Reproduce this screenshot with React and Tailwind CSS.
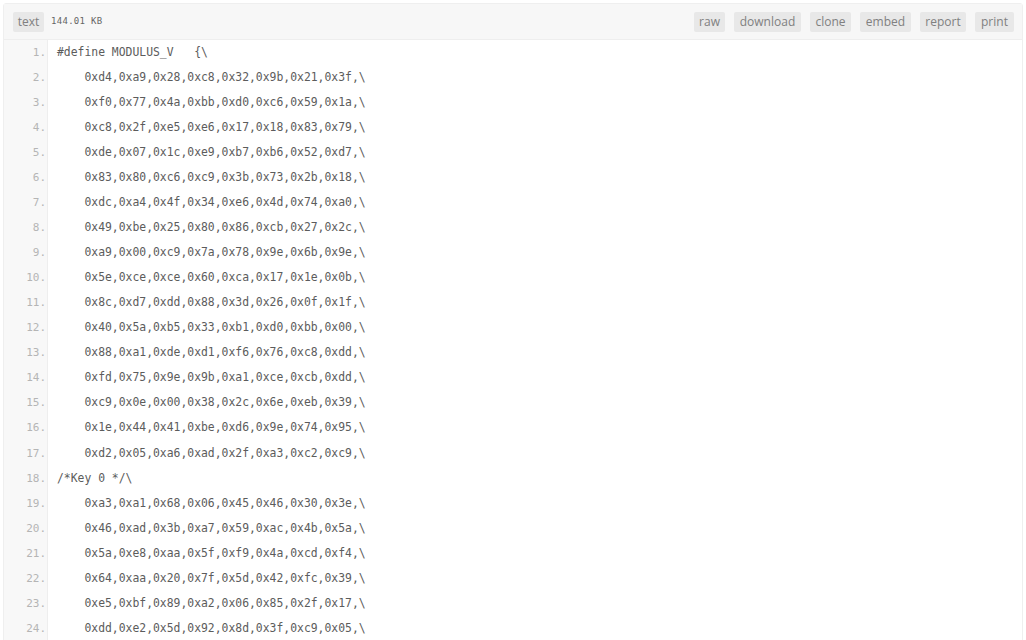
const lines = [
  "#define MODULUS_V   {\\",
  "    0xd4,0xa9,0x28,0xc8,0x32,0x9b,0x21,0x3f,\\",
  "    0xf0,0x77,0x4a,0xbb,0xd0,0xc6,0x59,0x1a,\\",
  "    0xc8,0x2f,0xe5,0xe6,0x17,0x18,0x83,0x79,\\",
  "    0xde,0x07,0x1c,0xe9,0xb7,0xb6,0x52,0xd7,\\",
  "    0x83,0x80,0xc6,0xc9,0x3b,0x73,0x2b,0x18,\\",
  "    0xdc,0xa4,0x4f,0x34,0xe6,0x4d,0x74,0xa0,\\",
  "    0x49,0xbe,0x25,0x80,0x86,0xcb,0x27,0x2c,\\",
  "    0xa9,0x00,0xc9,0x7a,0x78,0x9e,0x6b,0x9e,\\",
  "    0x5e,0xce,0xce,0x60,0xca,0x17,0x1e,0x0b,\\",
  "    0x8c,0xd7,0xdd,0x88,0x3d,0x26,0x0f,0x1f,\\",
  "    0x40,0x5a,0xb5,0x33,0xb1,0xd0,0xbb,0x00,\\",
  "    0x88,0xa1,0xde,0xd1,0xf6,0x76,0xc8,0xdd,\\",
  "    0xfd,0x75,0x9e,0x9b,0xa1,0xce,0xcb,0xdd,\\",
  "    0xc9,0x0e,0x00,0x38,0x2c,0x6e,0xeb,0x39,\\",
  "    0x1e,0x44,0x41,0xbe,0xd6,0x9e,0x74,0x95,\\",
  "    0xd2,0x05,0xa6,0xad,0x2f,0xa3,0xc2,0xc9,\\",
  "/*Key 0 */\\",
  "    0xa3,0xa1,0x68,0x06,0x45,0x46,0x30,0x3e,\\",
  "    0x46,0xad,0x3b,0xa7,0x59,0xac,0x4b,0x5a,\\",
  "    0x5a,0xe8,0xaa,0x5f,0xf9,0x4a,0xcd,0xf4,\\",
  "    0x64,0xaa,0x20,0x7f,0x5d,0x42,0xfc,0x39,\\",
  "    0xe5,0xbf,0x89,0xa2,0x06,0x85,0x2f,0x17,\\",
  "    0xdd,0xe2,0x5d,0x92,0x8d,0x3f,0xc9,0x05,\\",
];

const actions = [
  { label: "raw", width: "w-[31px]" },
  { label: "download", width: "w-[67px]" },
  { label: "clone", width: "w-[41px]" },
  { label: "embed", width: "w-[51px]" },
  { label: "report", width: "w-[46px]" },
  { label: "print", width: "w-[39px]" },
];

export default function App() {
  return (
    <div className="h-[640px] overflow-hidden bg-white pl-[3px] pr-[3px] pt-[3px] [font-family:'Open_Sans',sans-serif]">
      <div className="border border-[#efefef] rounded-t-[3px]">
        <div className="h-9 flex items-center justify-between bg-[#f7f7f7] border-b border-[#eeeeee] pl-[9px] pr-[8px]">
          <div className="flex items-center">
            <span className="w-[31px] h-5 leading-5 text-center rounded-[2px] bg-[#e8e8e8] text-[12px] text-[#808080]">text</span>
            <span className="ml-[7px] text-[9px] tracking-[0.3px] text-[#666666] [font-family:'DejaVu_Sans_Mono',monospace]">144.01 KB</span>
          </div>
          <div className="flex items-center gap-[9px]">
            {actions.map((a) => (
              <span key={a.label} className={`${a.width} h-5 leading-5 text-center rounded-[2px] bg-[#e8e8e8] text-[12px] text-[#808080]`}>{a.label}</span>
            ))}
          </div>
        </div>
        <div className="flex">
          <div className="w-[44px] shrink-0 bg-[#f8f8f8] border-r border-[#eeeeee]">
            {lines.map((_, i) => (
              <div key={i} className="h-[25.04px] leading-[25px] pr-px text-right text-[11px] text-[#b5b5b5] [font-family:'DejaVu_Sans_Mono',monospace]">{i + 1}.</div>
            ))}
          </div>
          <div className="flex-1 pl-[9px] [font-family:'DejaVu_Sans_Mono',monospace] text-[11.4px] text-[#5c5c5c]">
            {lines.map((l, i) => (
              <div key={i} className="h-[25.04px] leading-[25px] whitespace-pre">{l}</div>
            ))}
          </div>
        </div>
      </div>
    </div>
  );
}
